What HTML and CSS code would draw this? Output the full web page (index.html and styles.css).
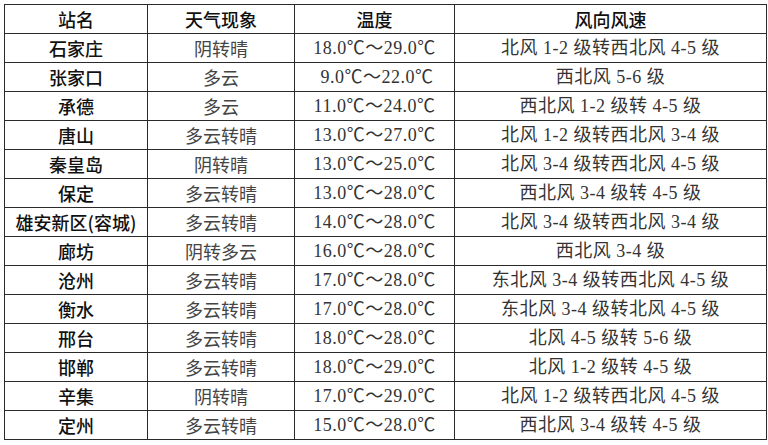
FILE: index.html
```html
<!DOCTYPE html>
<html lang="zh">
<head>
<meta charset="utf-8">
<link rel="stylesheet" href="styles.css">
</head>
<body>
<div class="page">
<table class="wx">
<colgroup>
<col class="c1"><col class="c2"><col class="c3"><col class="c4">
</colgroup>
<thead>
<tr><th>站名</th><th>天气现象</th><th>温度</th><th>风向风速</th></tr>
</thead>
<tbody>
<tr><td class="st">石家庄</td><td>阴转晴</td><td class="t">18.0℃～29.0℃</td><td class="t">北风 1-2 级转西北风 4-5 级</td></tr>
<tr><td class="st">张家口</td><td>多云</td><td class="t">&nbsp;9.0℃～22.0℃</td><td class="t">西北风 5-6 级</td></tr>
<tr><td class="st">承德</td><td>多云</td><td class="t">11.0℃～24.0℃</td><td class="t">西北风 1-2 级转 4-5 级</td></tr>
<tr><td class="st">唐山</td><td>多云转晴</td><td class="t">13.0℃～27.0℃</td><td class="t">北风 1-2 级转西北风 3-4 级</td></tr>
<tr><td class="st">秦皇岛</td><td>阴转晴</td><td class="t">13.0℃～25.0℃</td><td class="t">北风 3-4 级转西北风 4-5 级</td></tr>
<tr><td class="st">保定</td><td>多云转晴</td><td class="t">13.0℃～28.0℃</td><td class="t">西北风 3-4 级转 4-5 级</td></tr>
<tr><td class="st">雄安新区(容城)</td><td>多云转晴</td><td class="t">14.0℃～28.0℃</td><td class="t">北风 3-4 级转西北风 3-4 级</td></tr>
<tr><td class="st">廊坊</td><td>阴转多云</td><td class="t">16.0℃～28.0℃</td><td class="t">西北风 3-4 级</td></tr>
<tr><td class="st">沧州</td><td>多云转晴</td><td class="t">17.0℃～28.0℃</td><td class="t">东北风 3-4 级转西北风 4-5 级</td></tr>
<tr><td class="st">衡水</td><td>多云转晴</td><td class="t">17.0℃～28.0℃</td><td class="t">东北风 3-4 级转北风 4-5 级</td></tr>
<tr><td class="st">邢台</td><td>多云转晴</td><td class="t">18.0℃～28.0℃</td><td class="t">北风 4-5 级转 5-6 级</td></tr>
<tr><td class="st">邯郸</td><td>多云转晴</td><td class="t">18.0℃～29.0℃</td><td class="t">北风 1-2 级转 4-5 级</td></tr>
<tr><td class="st">辛集</td><td>阴转晴</td><td class="t">17.0℃～29.0℃</td><td class="t">北风 1-2 级转西北风 4-5 级</td></tr>
<tr><td class="st">定州</td><td>多云转晴</td><td class="t">15.0℃～28.0℃</td><td class="t">西北风 3-4 级转 4-5 级</td></tr>
</tbody>
</table>
</div>
</body>
</html>
```
FILE: styles.css
```css
html, body {
  margin: 0;
  padding: 0;
  background: #ffffff;
}
.page {
  padding: 4px 0 0 4px;
}
.wx {
  border-collapse: collapse;
  table-layout: fixed;
  width: 762px;
  font-family: "Liberation Serif", "Noto Sans CJK SC", serif;
  font-size: 18px;
  color: #3a3a3a;
}
.c1 { width: 143px; }
.c2 { width: 147px; }
.c3 { width: 160px; }
.c4 { width: 312px; }
.wx th, .wx td {
  border: 1px solid #2a2a2a;
  height: 28px;
  padding: 0;
  text-align: center;
  vertical-align: middle;
  line-height: 28px;
  white-space: nowrap;
  overflow: hidden;
}
.wx td {
  font-family: "Noto Sans CJK SC", sans-serif;
  font-weight: 400;
  color: #454545;
}
.wx td.t {
  font-family: "Liberation Serif", "Noto Sans CJK SC", serif;
  font-weight: 400;
  color: #333333;
  letter-spacing: 0.5px;
}
.wx th, .wx td.st {
  font-family: "Noto Sans CJK SC", sans-serif;
  font-weight: 500;
  color: #111111;
}
```
